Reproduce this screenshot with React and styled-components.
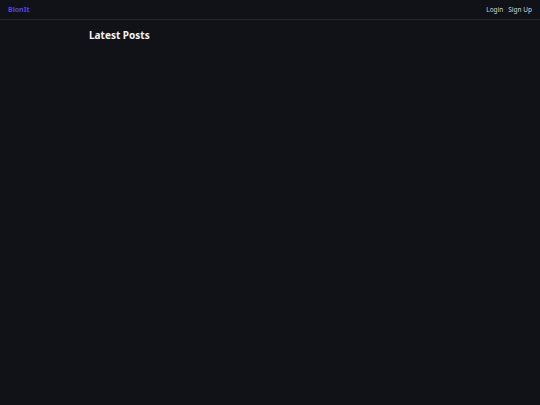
import styled, { createGlobalStyle } from "styled-components";

const Global = createGlobalStyle`
  html, body {
    margin: 0;
    padding: 0;
    background: #111217;
    font-family: "Noto Sans", "Open Sans", sans-serif;
  }
  #root {
    min-height: 405px;
    background: #111217;
  }
`;

const Header = styled.header`
  height: 19px;
  display: flex;
  align-items: center;
  justify-content: space-between;
  padding: 0 8px;
  border-bottom: 1px solid #26272d;
`;

const Logo = styled.div`
  font-size: 7px;
  font-weight: 700;
  color: #4f46e5;
`;

const Nav = styled.nav`
  display: flex;
  gap: 5px;
`;

const NavLink = styled.a`
  font-size: 6.5px;
  font-weight: 400;
  color: #d1d5db;
  text-decoration: none;
`;

const Main = styled.main`
  width: 362px;
  margin: 0 auto;
  padding-top: 9px;
`;

const Title = styled.h1`
  margin: 0;
  font-size: 10px;
  line-height: 13px;
  font-weight: 700;
  color: #f3f4f6;
`;

function App() {
  return (
    <>
      <Global />
      <Header>
        <Logo>BlonIt</Logo>
        <Nav>
          <NavLink href="#">Login</NavLink>
          <NavLink href="#">Sign Up</NavLink>
        </Nav>
      </Header>
      <Main>
        <Title>Latest Posts</Title>
      </Main>
    </>
  );
}

export default App;
